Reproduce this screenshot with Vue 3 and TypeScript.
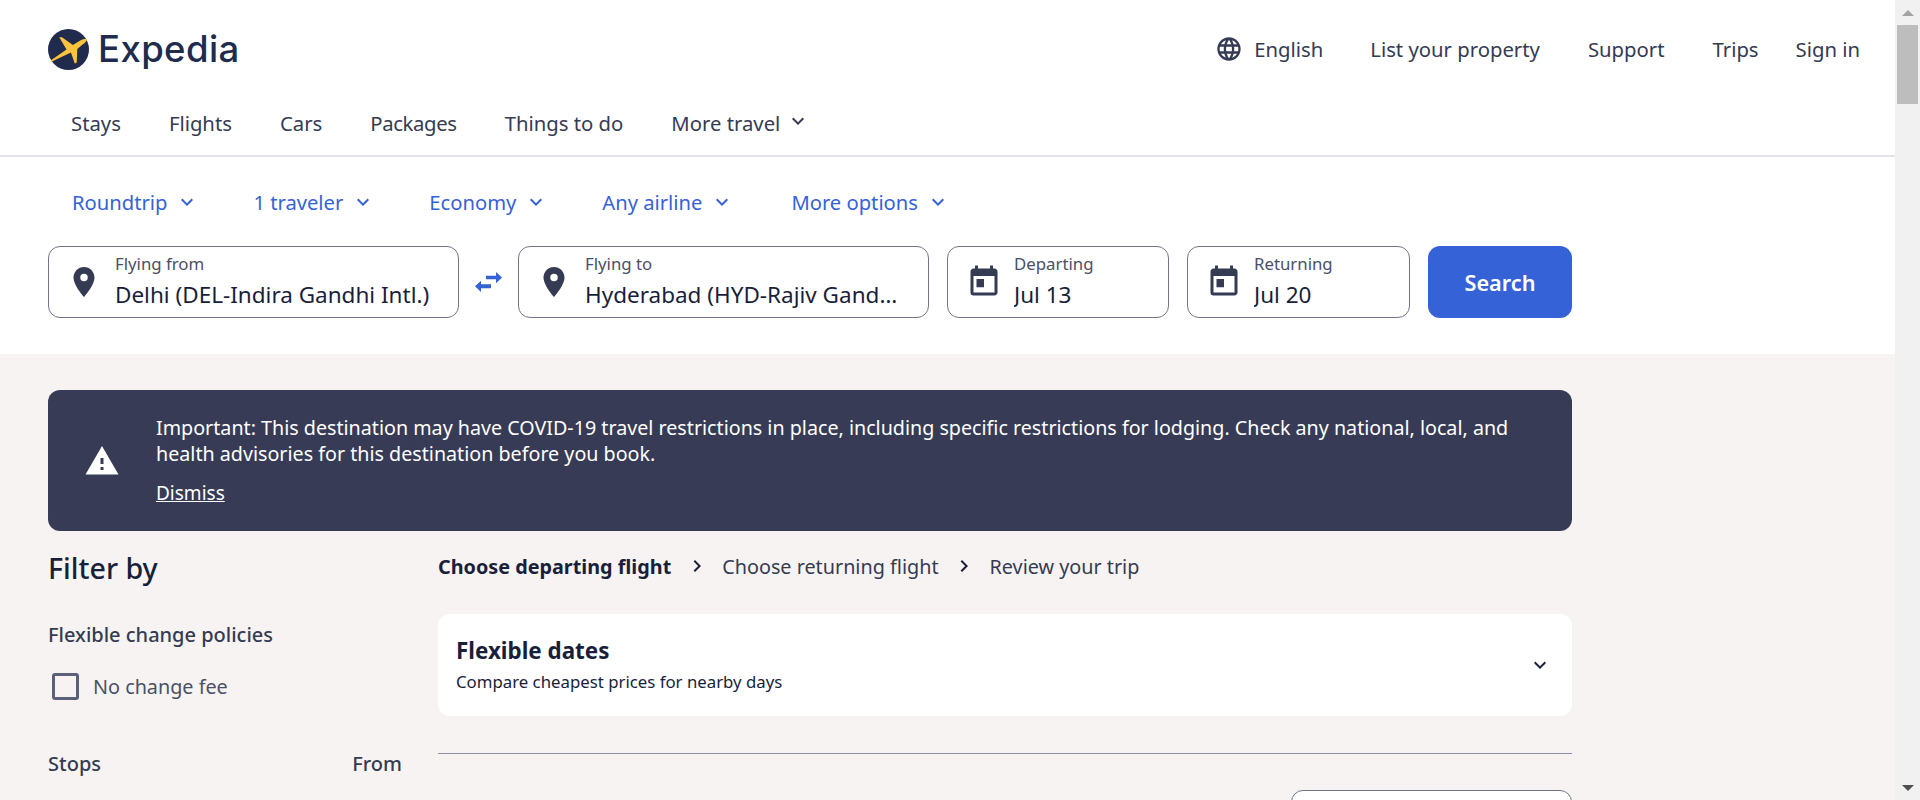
<script setup lang="ts">
const primary: string[] = ['Stays', 'Flights', 'Cars', 'Packages', 'Things to do']
const pills: string[] = ['Roundtrip', '1 traveler', 'Economy', 'Any airline', 'More options']
const chevron = 'M7.41 8.59 12 13.17l4.59-4.58L18 10l-6 6-6-6z'
const pin = 'M12 2C8.13 2 5 5.13 5 9c0 5.25 7 13 7 13s7-7.75 7-13c0-3.87-3.13-7-7-7zm0 9.5a2.5 2.5 0 0 1 0-5 2.5 2.5 0 0 1 0 5z'
const cal = 'M12 10H7v5.5h5zM16 1v2H8V1H6v2H5c-1.11 0-1.99.9-1.99 2L3 19a2 2 0 0 0 2 2h14c1.1 0 2-.9 2-2V5c0-1.1-.9-2-2-2h-1V1h-2zm3 18H5V8h14v11z'
const globe = 'M11.99 2C6.47 2 2 6.48 2 12s4.47 10 9.99 10C17.52 22 22 17.52 22 12S17.52 2 11.99 2zm6.93 6h-2.95a15.65 15.65 0 0 0-1.38-3.56A8.03 8.03 0 0 1 18.92 8zM12 4.04c.83 1.2 1.48 2.53 1.91 3.96h-3.82c.43-1.43 1.08-2.76 1.91-3.96zM4.26 14C4.1 13.36 4 12.69 4 12s.1-1.36.26-2h3.38c-.08.66-.14 1.32-.14 2 0 .68.06 1.34.14 2H4.26zm.82 2h2.95c.32 1.25.78 2.45 1.38 3.56A7.987 7.987 0 0 1 5.08 16zm2.95-8H5.08a7.987 7.987 0 0 1 4.33-3.56A15.65 15.65 0 0 0 8.03 8zM12 19.96c-.83-1.2-1.48-2.53-1.91-3.96h3.82c-.43 1.43-1.08 2.76-1.91 3.96zM14.34 14H9.66c-.09-.66-.16-1.32-.16-2 0-.68.07-1.35.16-2h4.68c.09.65.16 1.32.16 2 0 .68-.07 1.34-.16 2zm.25 5.56c.6-1.11 1.06-2.31 1.38-3.56h2.95a8.03 8.03 0 0 1-4.33 3.56zM16.36 14c.08-.66.14-1.32.14-2 0-.68-.06-1.34-.14-2h3.38c.16.64.26 1.31.26 2s-.1 1.36-.26 2h-3.38z'
</script>

<template>
  <div class="shell">
    <div class="page">
      <header class="top">
        <a class="brand">
          <svg class="mark" viewBox="0 0 42 42" aria-hidden="true">
            <circle cx="21" cy="21" r="21" fill="#202b4d" />
            <path d="M3 32 19 21 11.500 8.500h2.800L25.500 16.500l8-5c2.500-1.300 5.500-1.500 6.300-.8.300 1.300-2 3.500-4 5L30 20.500l-.5 13.500-2 1.500-4-11.500L3.500 33.500z" fill="#fdc33c" />
          </svg>
          <span class="word">Expedia</span>
        </a>
        <nav class="util">
          <a class="lang">
            <svg class="globe" viewBox="0 0 24 24"><path :d="globe" /></svg>
            English
          </a>
          <a class="list">List your property</a>
          <a class="support">Support</a>
          <a class="trips">Trips</a>
          <a>Sign in</a>
        </nav>
      </header>

      <nav class="primary">
        <a v-for="p in primary" :key="p">{{ p }}</a>
        <a class="more">More travel
          <svg class="chev" viewBox="0 0 24 24"><path :d="chevron" /></svg>
        </a>
      </nav>

      <section class="search">
        <div class="pills">
          <a v-for="p in pills" :key="p" class="pill">{{ p }}
            <svg class="chev" viewBox="0 0 24 24"><path :d="chevron" /></svg>
          </a>
        </div>
        <form class="fields" @submit.prevent>
          <div class="field place">
            <svg class="ficon" viewBox="0 0 24 24"><path :d="pin" /></svg>
            <div class="ftext"><label>Flying from</label><div class="val">Delhi (DEL-Indira Gandhi Intl.)</div></div>
          </div>
          <svg class="swap" viewBox="0 0 27 20"><path d="M11 3.700h10V0l6 5.600-6 5.700V7.300H11zM16 12.300H6V8.800L0 14.300 6 20v-3.700h10z" /></svg>
          <div class="field place">
            <svg class="ficon" viewBox="0 0 24 24"><path :d="pin" /></svg>
            <div class="ftext"><label>Flying to</label><div class="val">Hyderabad (HYD-Rajiv Gandhi Intl.)</div></div>
          </div>
          <div class="field date dep">
            <svg class="ficon" viewBox="0 0 24 24"><path :d="cal" /></svg>
            <div class="ftext"><label>Departing</label><div class="val">Jul 13</div></div>
          </div>
          <div class="field date ret">
            <svg class="ficon" viewBox="0 0 24 24"><path :d="cal" /></svg>
            <div class="ftext"><label>Returning</label><div class="val">Jul 20</div></div>
          </div>
          <button class="go">Search</button>
        </form>
      </section>

      <main class="body">
        <div class="alert">
          <svg class="warn" viewBox="0 0 24 24"><path d="M1 21h22L12 2 1 21zm12-3h-2v-2h2v2zm0-4h-2v-4h2v4z" /></svg>
          <div>
            <p>Important: This destination may have COVID-19 travel restrictions in place, including specific restrictions for lodging. Check any national, local, and health advisories for this destination before you book.</p>
            <a class="dismiss">Dismiss</a>
          </div>
        </div>

        <div class="cols">
          <aside class="filters">
            <h2>Filter by</h2>
            <h3>Flexible change policies</h3>
            <label class="check"><span class="box"></span>No change fee</label>
            <div class="stops"><span>Stops</span><span>From</span></div>
          </aside>
          <div class="results">
            <ol class="crumbs">
              <li class="on">Choose departing flight</li>
              <li class="sep"><svg viewBox="0 0 24 24"><path d="M8.590 7.410 13.170 12l-4.580 4.590L10 18l6-6-6-6z" /></svg></li>
              <li>Choose returning flight</li>
              <li class="sep"><svg viewBox="0 0 24 24"><path d="M8.590 7.410 13.170 12l-4.580 4.590L10 18l6-6-6-6z" /></svg></li>
              <li>Review your trip</li>
            </ol>
            <div class="card">
              <div>
                <div class="ctitle">Flexible dates</div>
                <div class="csub">Compare cheapest prices for nearby days</div>
              </div>
              <svg class="cchev" viewBox="0 0 24 24"><path :d="chevron" /></svg>
            </div>
            <hr class="rule" />
            <div class="sortrow"><div class="sort"></div></div>
          </div>
        </div>
      </main>
    </div>

    <aside class="bar" aria-hidden="true">
      <span class="up"></span>
      <span class="thumb"></span>
      <span class="fill"></span>
      <span class="down"></span>
    </aside>
  </div>
</template>

<style>
html, body { margin: 0; height: 800px; overflow: hidden; }
</style>

<style scoped>
* { box-sizing: border-box; }
.shell { display: flex; height: 800px; overflow: hidden; font-family: "Noto Sans", "Open Sans", sans-serif; font-size: 20.3px; color: #343b53; }
.page { flex: 1; min-width: 0; background: #fff; overflow: hidden; }

.top { height: 98px; padding: 0 35px 0 48px; display: flex; align-items: center; justify-content: space-between; }
.brand { display: flex; align-items: center; gap: 9px; }
.mark { width: 41px; height: 41px; }
.word { font-family: Inter, sans-serif; font-size: 36.5px; font-weight: 500; color: #202b4d; letter-spacing: 0.4px; line-height: 42px; }
.util { display: flex; align-items: center; }
.util a { display: flex; align-items: center; white-space: nowrap; }
.lang { gap: 11px; margin-right: 47px; }
.globe { width: 28px; height: 28px; fill: #343b53; }
.list { margin-right: 48px; }
.support { margin-right: 48px; }
.trips { margin-right: 37px; }

.primary { height: 59px; padding: 0 0 7px 71px; display: flex; align-items: center; gap: 48px; border-bottom: 2px solid #e3e3ea; }
.primary a:nth-child(4) { letter-spacing: -0.35px; }
.more { display: flex; align-items: center; }
.chev { width: 24px; height: 24px; fill: currentColor; margin-left: 6px; }
.more .chev { margin-top: -5px; }

.search { height: 197px; padding: 30px 0 0 48px; }
.pills { display: flex; height: 30px; padding-left: 24px; gap: 54px; align-items: center; color: #3662d8; font-size: 20.2px; }
.pill { display: flex; align-items: center; white-space: nowrap; }
.pill:last-child { margin-left: 3px; }
.pill .chev { margin-left: 8px; }
.fields { display: flex; align-items: stretch; width: 1524px; height: 72px; margin-top: 29px; }
.field { display: flex; align-items: center; border: 1px solid #73738a; border-radius: 12px; background: #fff; min-width: 0; }
.place { width: 411px; padding-left: 18px; }
.date { padding-left: 18px; }
.dep { width: 222px; margin-left: 18px; }
.ret { width: 223px; margin-left: 18px; }
.ficon { width: 36px; height: 36px; fill: #343b53; flex: none; margin-right: 12px; }
.place .ficon { margin-left: -1px; margin-right: 13px; }
.ftext { min-width: 0; flex: 1; padding-right: 18px; padding-top: 1px; }
.ftext label { display: block; font-size: 16.8px; line-height: 22px; color: #4a5068; margin-top: -2px; }
.val { font-size: 22.5px; line-height: 30px; margin-top: 5px; color: #191e3b; white-space: nowrap; overflow: hidden; text-overflow: ellipsis; }
.swap { width: 27px; height: 20px; fill: #3662d8; align-self: center; margin: 0 16px; flex: none; }
.go { width: 144px; margin-left: 18px; border: 0; border-radius: 12px; background: #3662d8; color: #fff; font: 600 21.7px "Noto Sans", sans-serif; }

.body { background: #f7f3f2; height: 446px; padding: 36px 0 0 48px; }
.alert { width: 1524px; height: 141px; border-radius: 12px; background: #373b55; color: #fff; display: flex; align-items: center; padding: 0 36px; gap: 18px; font-size: 19.7px; }
.warn { width: 36px; height: 36px; fill: #fff; flex: none; margin-right: 18px; }
.alert p { margin: 0; line-height: 26px; }
.dismiss { display: inline-block; margin-top: 14px; text-decoration: underline; line-height: 24px; font-size: 19px; }

.cols { display: flex; width: 1524px; }
.filters { width: 390px; flex: none; }
.filters h2 { margin: 18px 0 0; font-size: 28.6px; font-weight: 500; line-height: 38px; color: #191e3b; }
.filters h3 { margin: 35px 0 0; font-size: 20px; font-weight: 500; line-height: 26px; }
.check { display: flex; align-items: center; margin-top: 20px; height: 36px; color: #4a5068; font-size: 19.8px; }
.box { width: 27px; height: 27px; border: 3px solid #5b6078; border-radius: 3px; margin: 0 14px 0 4px; background: transparent; }
.stops { display: flex; justify-content: space-between; width: 354px; margin-top: 47px; font-weight: 500; line-height: 26px; font-size: 20px; }
.results { flex: 1; min-width: 0; }
.crumbs { list-style: none; margin: 18px 0 0; padding: 0; display: flex; align-items: center; height: 34px; font-size: 19.8px; }
.crumbs .on { font-weight: 700; color: #191e3b; }
.sep { width: 51px; display: flex; justify-content: center; }
.sep svg { width: 24px; height: 24px; fill: #191e3b; }
.card { margin-top: 31px; height: 102px; background: #fff; border-radius: 12px; display: flex; align-items: center; justify-content: space-between; padding: 0 20px 0 18px; }
.ctitle { font-size: 22.4px; font-weight: 700; line-height: 28px; color: #191e3b; }
.csub { font-size: 16.8px; line-height: 22px; margin-top: 6px; color: #191e3b; }
.cchev { width: 24px; height: 24px; fill: #191e3b; }
.rule { margin: 37px 0 0; border: 0; height: 1px; background: #8f8fa3; }
.sortrow { display: flex; justify-content: flex-end; margin-top: 36px; }
.sort { width: 281px; height: 60px; border: 1px solid #73738a; border-radius: 12px; background: #fff; }

.bar { width: 25px; flex: none; background: #f1f1f1; display: flex; flex-direction: column; align-items: center; }
.up, .down { width: 0; height: 0; border-left: 6px solid transparent; border-right: 6px solid transparent; }
.up { margin-top: 10px; border-bottom: 6px solid #a3a3a3; }
.thumb { width: 21px; height: 79px; margin-top: 9px; background: #bdbdbd; }
.fill { flex: 1; }
.down { margin-bottom: 9px; border-top: 6px solid #505050; }
</style>
